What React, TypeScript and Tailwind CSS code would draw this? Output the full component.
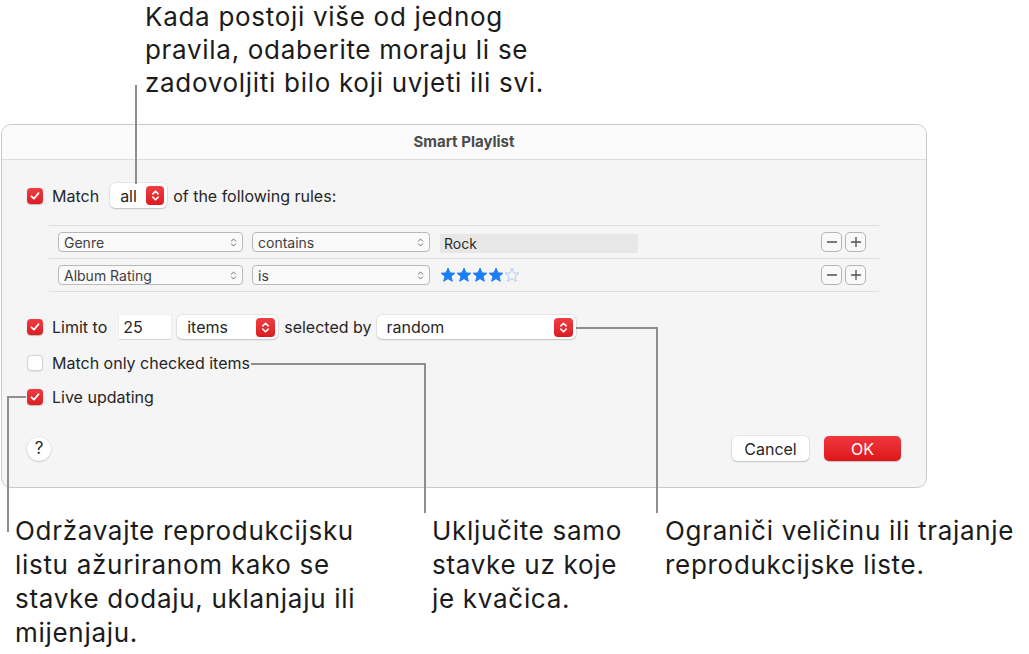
import React from "react";

const Check = () => (
  <svg viewBox="0 0 16 16" className="w-[12px] h-[12px]">
    <path d="M3.3 8.4 L6.6 11.6 L12.7 4.2" stroke="white" strokeWidth="2.4" fill="none" strokeLinecap="round" strokeLinejoin="round" />
  </svg>
);

function Checkbox({ checked }: { checked: boolean }) {
  return checked ? (
    <div className="w-4 h-4 shrink-0 rounded-[4px] bg-linear-to-b from-[#ef3c42] to-[#dc1c22] flex items-center justify-center shadow-[0_0.5px_1px_rgba(0,0,0,0.25)]">
      <Check />
    </div>
  ) : (
    <div className="w-4 h-4 shrink-0 rounded-[4px] bg-white border border-[#d4d4d4] shadow-[0_0.5px_1px_rgba(0,0,0,0.08)]" />
  );
}

function RedStepper({ w = 18, h = 19 }: { w?: number; h?: number }) {
  return (
    <div
      className="rounded-[4px] bg-linear-to-b from-[#f03d43] to-[#db1a20] flex items-center justify-center shrink-0"
      style={{ width: w, height: h }}
    >
      <svg viewBox="0 0 10 14" className="w-[9px] h-[13px]">
        <path d="M2 5.2 L5 2.2 L8 5.2 M2 8.8 L5 11.8 L8 8.8" stroke="white" strokeWidth="1.7" fill="none" strokeLinecap="round" strokeLinejoin="round" />
      </svg>
    </div>
  );
}

function GrayChevrons() {
  return (
    <svg viewBox="0 0 8 12" className="w-[7px] h-[11px] shrink-0">
      <path d="M1.5 4.5 L4 2 L6.5 4.5 M1.5 7.5 L4 10 L6.5 7.5" stroke="#6b6b6b" strokeWidth="1.1" fill="none" strokeLinecap="round" strokeLinejoin="round" />
    </svg>
  );
}

function RulePopup({ label, width }: { label: string; width: number }) {
  return (
    <div
      className="h-[20px] border border-[#b9b9b9] rounded-[4px] bg-[#fafafa] flex items-center justify-between pl-[5px] pr-[5px] text-[14px] text-[#3f3f3f]"
      style={{ width }}
    >
      <span>{label}</span>
      <GrayChevrons />
    </div>
  );
}

function SmallBtn({ plus }: { plus?: boolean }) {
  return (
    <div className="w-[21px] h-[20px] border border-[#b4b4b4] rounded-[5px] bg-[#f9f9f9] flex items-center justify-center">
      <svg viewBox="0 0 12 12" className="w-[12px] h-[12px]">
        <path d={plus ? "M1 6 H11 M6 1 V11" : "M1 6 H11"} stroke="#505050" strokeWidth="1.3" />
      </svg>
    </div>
  );
}

function Star({ filled }: { filled: boolean }) {
  return (
    <svg viewBox="0 0 16 16" className="w-[16px] h-[16px]">
      <path
        d="M8 1.2 L9.9 5.9 L14.9 6.2 L11 9.4 L12.3 14.3 L8 11.6 L3.7 14.3 L5 9.4 L1.1 6.2 L6.1 5.9 Z"
        fill={filled ? "#1b7cf6" : "none"}
        stroke={filled ? "#1b7cf6" : "#a9cdf9"}
        strokeWidth="1"
        strokeLinejoin="round"
      />
    </svg>
  );
}

const popupShadow = "shadow-[0_0_0_0.5px_rgba(0,0,0,0.12),0_1px_1.5px_rgba(0,0,0,0.16)]";

export default function App() {
  return (
    <div className="relative w-[1029px] h-[654px] bg-white overflow-hidden font-[Inter,'Noto_Sans',sans-serif] text-[#1b1b1b]">
      {/* top callout */}
      <div className="h-[124px] pl-[145px] pt-0 text-[26px] leading-[33px] tracking-[0.7px] whitespace-nowrap">
        Kada postoji više od jednog
        <br />
        pravila, odaberite moraju li se
        <br />
        zadovoljiti bilo koji uvjeti ili svi.
      </div>

      {/* dialog */}
      <div className="ml-[1px] w-[926px] h-[364px] rounded-[10px] border border-[#cacaca] bg-[#f5f5f5] flex flex-col overflow-hidden">
        <div className="h-[35px] shrink-0 bg-[#fbfbfb] border-b border-[#dddddd] flex items-center justify-center text-[15px] font-bold text-[#4b4b4b]">
          Smart Playlist
        </div>
        <div className="flex-1 flex flex-col px-[25px] text-[16px] text-[#262626]">
          {/* match row */}
          <div className="mt-[23px] h-[25px] flex items-center">
            <Checkbox checked />
            <span className="ml-[9px]">Match</span>
            <div className={`ml-[11px] h-[25px] w-[57px] bg-white rounded-[5px] ${popupShadow} flex items-center justify-between pl-[10px] pr-[3px]`}>
              <span>all</span>
              <RedStepper />
            </div>
            <span className="ml-[6px]">of the following rules:</span>
          </div>

          {/* rules */}
          <div className="mt-[17px] mx-[22px] border-t border-b border-[#dedede]">
            <div className="h-[32px] flex items-center pl-[9px] pr-[13px]">
              <RulePopup label="Genre" width={185} />
              <div className="ml-[9px]">
                <RulePopup label="contains" width={178} />
              </div>
              <div className="ml-[10px] w-[198px] h-[19px] bg-[#e7e7e7] flex items-center pl-[4px] text-[14px] text-[#2a2a2a] translate-y-[1px]">
                Rock
              </div>
              <div className="ml-auto flex gap-[3px]">
                <SmallBtn />
                <SmallBtn plus />
              </div>
            </div>
            <div className="h-[33px] border-t border-[#dedede] flex items-center pl-[9px] pr-[13px]">
              <RulePopup label="Album Rating" width={185} />
              <div className="ml-[9px]">
                <RulePopup label="is" width={178} />
              </div>
              <div className="ml-[10px] flex">
                <Star filled />
                <Star filled />
                <Star filled />
                <Star filled />
                <Star filled={false} />
              </div>
              <div className="ml-auto flex gap-[3px]">
                <SmallBtn />
                <SmallBtn plus />
              </div>
            </div>
          </div>

          {/* limit row */}
          <div className="mt-[22px] h-[26px] flex items-center">
            <Checkbox checked />
            <span className="ml-[9px]">Limit to</span>
            <div className="ml-[12px] w-[52px] h-[24px] bg-white shadow-[0_0.5px_0_rgba(0,0,0,0.18),0_0_0_0.5px_rgba(0,0,0,0.06)] flex items-center pl-[4px]">
              25
            </div>
            <div className={`ml-[6px] w-[101px] h-[24px] bg-white rounded-[5px] ${popupShadow} flex items-center justify-between pl-[10px] pr-[3px]`}>
              <span>items</span>
              <RedStepper w={19} h={19} />
            </div>
            <span className="ml-[6px]">selected by</span>
            <div className={`ml-[5px] w-[199px] h-[24px] bg-white rounded-[5px] ${popupShadow} flex items-center justify-between pl-[10px] pr-[3px]`}>
              <span>random</span>
              <RedStepper w={19} h={19} />
            </div>
          </div>

          <div className="mt-[11px] h-[24px] flex items-center">
            <Checkbox checked={false} />
            <span className="ml-[9px]">Match only checked items</span>
          </div>

          <div className="mt-[10px] h-[24px] flex items-center">
            <Checkbox checked />
            <span className="ml-[9px]">Live updating</span>
          </div>

          <div className="mt-[27px] h-[25px] flex items-center">
            <div className="w-[24px] h-[24px] rounded-full bg-white shadow-[0_0_0_0.5px_rgba(0,0,0,0.1),0_1px_1.5px_rgba(0,0,0,0.15)] flex items-center justify-center text-[17px]">
              ?
            </div>
            <div className="ml-auto flex gap-[15px]">
              <div className={`w-[77px] h-[25px] bg-white rounded-[5px] ${popupShadow} flex items-center justify-center`}>
                Cancel
              </div>
              <div className="w-[77px] h-[25px] rounded-[5px] bg-linear-to-b from-[#ef363c] to-[#df1519] shadow-[0_0.5px_1px_rgba(0,0,0,0.2)] flex items-center justify-center text-white">
                OK
              </div>
            </div>
          </div>
        </div>
      </div>

      {/* bottom callouts */}
      <div className="mt-[26px] flex text-[26px] leading-[34px] tracking-[0.7px] whitespace-nowrap">
        <div className="w-[432px] pl-[15px]">
          Održavajte reprodukcijsku
          <br />
          listu ažuriranom kako se
          <br />
          stavke dodaju, uklanjaju ili
          <br />
          mijenjaju.
        </div>
        <div className="w-[233px]">
          Uključite samo
          <br />
          stavke uz koje
          <br />
          je kvačica.
        </div>
        <div>
          Ograniči veličinu ili trajanje
          <br />
          reprodukcijske liste.
        </div>
      </div>

      {/* leader lines */}
      <svg className="absolute inset-0 pointer-events-none" width="1029" height="654">
        <g stroke="#8e8e8e" strokeWidth="2" fill="none">
          <path d="M136 85 V184" />
          <path d="M576 328 H657 V513" />
          <path d="M251 364 H425 V513" />
          <path d="M26 397 H8 V532" />
        </g>
      </svg>
    </div>
  );
}
